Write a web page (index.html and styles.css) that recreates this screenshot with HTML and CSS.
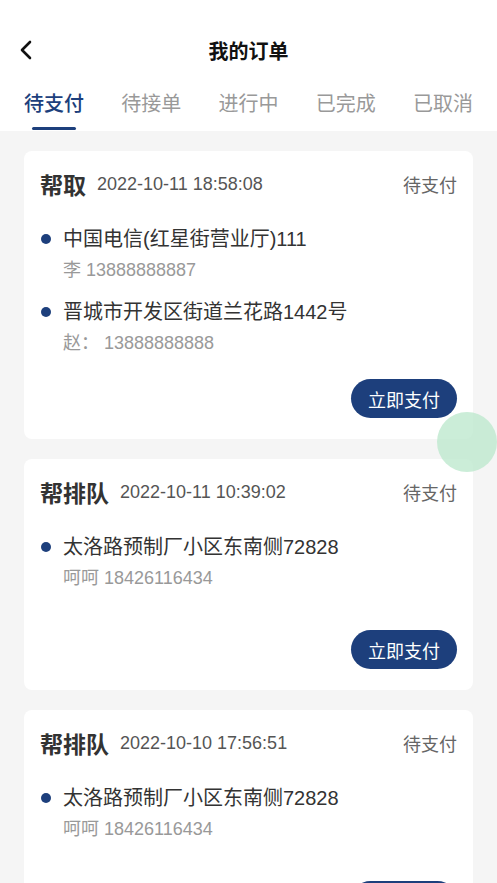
FILE: index.html
```html
<!DOCTYPE html>
<html lang="zh-CN">
<head>
    <meta charset="UTF-8">
    <meta name="viewport" content="width=device-width, initial-scale=1.0">
    <title>我的订单</title>
    <link rel="stylesheet" href="styles.css">
</head>
<body>
    <div class="top">
        <div class="nav">
            <span class="back">
                <svg width="14" height="20" viewBox="0 0 14 20">
                    <path d="M11 2 L3 10 L11 18" fill="none" stroke="#111" stroke-width="2.6" stroke-linecap="round" stroke-linejoin="round"/>
                </svg>
            </span>
            <h1>我的订单</h1>
        </div>

        <div class="tabs">
            <div class="tab active">待支付</div>
            <div class="tab">待接单</div>
            <div class="tab">进行中</div>
            <div class="tab">已完成</div>
            <div class="tab">已取消</div>
        </div>
    </div>

    <div class="list">
        <div class="card card-pickup">
            <div class="card-head">
                <span class="type">帮取</span>
                <span class="time">2022-10-11 18:58:08</span>
                <span class="status">待支付</span>
            </div>
            <div class="addr">
                <div class="addr-line"><span class="dot"></span>中国电信(红星街营业厅)111</div>
                <div class="addr-sub">李 13888888887</div>
            </div>
            <div class="addr">
                <div class="addr-line"><span class="dot"></span>晋城市开发区街道兰花路1442号</div>
                <div class="addr-sub">赵： 13888888888</div>
            </div>
            <div class="card-foot">
                <button class="pay">立即支付</button>
            </div>
        </div>

        <div class="card">
            <div class="card-head">
                <span class="type">帮排队</span>
                <span class="time">2022-10-11 10:39:02</span>
                <span class="status">待支付</span>
            </div>
            <div class="addr">
                <div class="addr-line"><span class="dot"></span>太洛路预制厂小区东南侧72828</div>
                <div class="addr-sub">呵呵 18426116434</div>
            </div>
            <div class="card-foot">
                <button class="pay">立即支付</button>
            </div>
        </div>

        <div class="card">
            <div class="card-head">
                <span class="type">帮排队</span>
                <span class="time">2022-10-10 17:56:51</span>
                <span class="status">待支付</span>
            </div>
            <div class="addr">
                <div class="addr-line"><span class="dot"></span>太洛路预制厂小区东南侧72828</div>
                <div class="addr-sub">呵呵 18426116434</div>
            </div>
            <div class="card-foot">
                <button class="pay">立即支付</button>
            </div>
        </div>
    </div>

    <!-- 悬浮按钮 -->
    <div class="float-ball"></div>
</body>
</html>
```

FILE: styles.css
```css
html, body {
    height: 100%;
}

body {
    margin: 0;
    padding: 0;
    background: #f5f5f5;
    font-family: 'Liberation Sans', 'Noto Sans CJK SC', sans-serif;
    color: #333;
    overflow: hidden;
}

.top {
    background: #fff;
    padding-top: 25px;
}

.nav {
    height: 50px;
    display: flex;
    align-items: center;
    justify-content: center;
    position: relative;
}

.nav h1 {
    margin: 0;
    font-size: 20px;
    font-weight: bold;
    color: #111;
}

.back {
    position: absolute;
    left: 19px;
    top: 15px;
    display: flex;
}

.tabs {
    display: flex;
    justify-content: space-between;
    padding: 0 24px;
    height: 56px;
}

.tab {
    font-size: 20px;
    line-height: 28px;
    padding-top: 15px;
    color: #999;
    position: relative;
}

.tab.active {
    color: #1d3f7c;
    font-weight: 500;
}

.tab.active::after {
    content: "";
    position: absolute;
    left: 8px;
    right: 8px;
    top: 52px;
    height: 3px;
    border-radius: 2px;
    background: #1d3f7c;
}

.list {
    padding: 20px 24px;
    display: flex;
    flex-direction: column;
    gap: 20px;
}

.card {
    background: #fff;
    border-radius: 8px;
    padding: 18px 16px 21px;
}

.card-head {
    display: flex;
    align-items: center;
    height: 30px;
}

.type {
    font-size: 23px;
    font-weight: bold;
    color: #333;
    margin-right: 11px;
}

.time {
    font-size: 18px;
    color: #555;
}

.status {
    margin-left: auto;
    font-size: 18px;
    color: #666;
}

.addr {
    margin-top: 27px;
}

.addr + .addr {
    margin-top: 17px;
}

.addr-line {
    display: flex;
    align-items: center;
    font-size: 20px;
    line-height: 26px;
    color: #333;
}

.dot {
    width: 10px;
    height: 10px;
    border-radius: 50%;
    background: #1d3f7c;
    margin: 0 12px 0 1px;
    flex-shrink: 0;
}

.addr-sub {
    margin-top: 6px;
    padding-left: 23px;
    font-size: 18px;
    line-height: 24px;
    color: #999;
}

.card-foot {
    display: flex;
    justify-content: flex-end;
    margin-top: 40px;
}

.card-pickup .card-foot {
    margin-top: 24px;
}

.pay {
    width: 106px;
    height: 39px;
    border: none;
    border-radius: 20px;
    background: #1d3f7c;
    color: #fff;
    font-family: inherit;
    font-size: 18px;
    padding: 0;
}

.float-ball {
    position: fixed;
    left: 437px;
    top: 412px;
    width: 60px;
    height: 60px;
    border-radius: 50%;
    background: rgba(190, 232, 206, 0.8);
}
```
